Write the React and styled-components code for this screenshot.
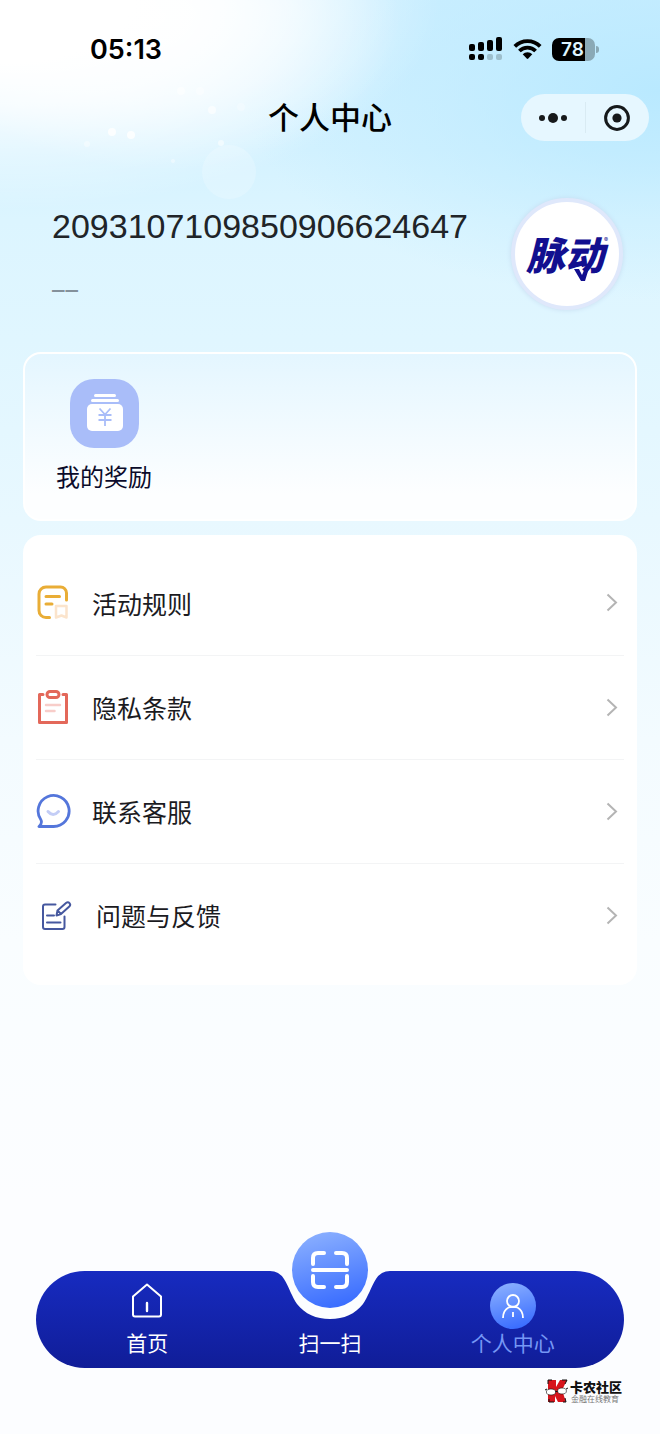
import React from 'react';
import styled, { createGlobalStyle } from 'styled-components';

const userId = '2093107109850906624647';

const GlobalStyle = createGlobalStyle`
    * {
        box-sizing: border-box;
    }

    body {
        margin: 0;
        color: #1b1b1f;
        font-family: Inter, "Noto Sans CJK SC", sans-serif;
        background: #fbfdff;
    }

    h1, p, ul {
        margin: 0;
        padding: 0;
    }

    button {
        padding: 0;
        border: 0;
        background: none;
        color: inherit;
        font: inherit;
        cursor: pointer;
    }

    a {
        color: inherit;
        text-decoration: none;
    }

    svg {
        display: block;
        flex: none;
    }
`;

const Page = styled.div`
    position: relative;
    isolation: isolate;
    display: flex;
    flex-direction: column;
    min-height: 100vh;
    background:
        radial-gradient(ellipse 440px 210px at 0 0, #fff 30%, rgba(255, 255, 255, .8) 50%, rgba(255, 255, 255, .35) 75%, rgba(255, 255, 255, 0) 100%),
        radial-gradient(ellipse 240px 150px at 160px 20px, rgba(255, 255, 255, .9) 0%, rgba(255, 255, 255, .5) 55%, rgba(255, 255, 255, 0) 100%),
        radial-gradient(ellipse 420px 210px at 100% 90px, #b9e9ff 0%, rgba(185, 233, 255, .45) 50%, rgba(185, 233, 255, 0) 100%),
        linear-gradient(180deg, #cdefff 0, #d4f2ff 150px, #dcf5ff 220px, #e0f6ff 340px, #e8f8ff 520px, #f3fbff 740px, #f9fdff 940px, #fcfdff 1200px);
`;

const Sparkles = styled.svg`
    position: absolute;
    top: 0;
    left: 0;
    z-index: -1;
`;

const StatusBar = styled.div`
    display: flex;
    align-items: center;
    justify-content: space-between;
    height: 94px;
    padding: 4px 65px 0 90px;
`;

const Clock = styled.span`
    font-size: 27px;
    font-weight: 600;
    color: #000;
`;

const StatusIcons = styled.div`
    display: flex;
    align-items: center;
    gap: 10px;
`;

const Battery = styled.div`
    position: relative;
    width: 43px;
    height: 23px;
    padding-right: 2px;
    border-radius: 7px;
    background: linear-gradient(90deg, #000 33px, #8aa9b6 33px);
    color: #dff4ff;
    font-size: 19px;
    font-weight: 600;
    line-height: 23px;
    text-align: center;

    &::after {
        content: "";
        position: absolute;
        top: 8px;
        right: -4px;
        width: 3px;
        height: 7px;
        border-radius: 0 3px 3px 0;
        background: #8aa9b6;
    }
`;

const TitleBar = styled.header`
    display: grid;
    grid-template-columns: 1fr auto 1fr;
    align-items: center;
    height: 47px;
    padding: 0 11px;
`;

const Title = styled.h1`
    grid-column: 2;
    font-size: 31px;
    font-weight: 500;
    line-height: 47px;
    color: #000;
`;

const Capsule = styled.div`
    justify-self: end;
    display: flex;
    align-items: center;
    width: 128px;
    height: 47px;
    border-radius: 24px;
    background: #e6f7ff;
`;

const CapsuleButton = styled.button`
    flex: 1;
    display: flex;
    justify-content: center;
    height: 31px;
    align-items: center;

    & + & {
        border-left: 1px solid #d9ebf3;
    }
`;

const Profile = styled.section`
    display: flex;
    justify-content: space-between;
    padding: 57px 37px 0 52px;
`;

const UserId = styled.p`
    padding-top: 8px;
    font-family: "Liberation Sans", sans-serif;
    font-size: 34px;
    line-height: 40px;
    color: #202428;
`;

const UserNote = styled.p`
    display: flex;
    gap: 1px;
    padding-top: 28px;
    font-size: 25px;
    line-height: 32px;
    color: #84919b;
`;

const Avatar = styled.div`
    flex: none;
    display: flex;
    align-items: center;
    justify-content: center;
    width: 112px;
    height: 112px;
    border: 4px solid #dfe8fb;
    border-radius: 50%;
    background: #fff;
    box-shadow: 0 0 5px #c6dcf0;
    color: #120f8f;
`;

const Brand = styled.span`
    position: relative;
    padding-top: 3px;
    font-size: 39px;
    font-weight: 900;
    font-style: italic;
    line-height: 48px;
`;

const BrandTail = styled.svg`
    position: absolute;
    right: 13px;
    bottom: -3px;
`;

const Registered = styled.sup`
    align-self: flex-start;
    padding-top: 34px;
    font-size: 6px;
    line-height: 8px;
`;

const RewardCard = styled.section`
    margin: 42px 23px 0;
    padding: 25px 31px 23px;
    border: 2px solid #fff;
    border-radius: 18px;
    background: linear-gradient(180deg, #e4f6ff 0%, #fdfeff 85%);
`;

const RewardLink = styled.a`
    display: inline-flex;
    flex-direction: column;
    align-items: center;
    gap: 12px;
    vertical-align: top;
    font-size: 24px;
    line-height: 36px;
    color: #0b0b2a;
`;

const Menu = styled.ul`
    margin: 14px 23px 0;
    padding: 16px 13px 18px;
    border-radius: 18px;
    background: #fff;
    list-style: none;
`;

const MenuItem = styled.li`
    & + & {
        border-top: 1px solid #f3f4f5;
    }
`;

const MenuLink = styled.a`
    display: flex;
    align-items: center;
    height: 104px;
    padding-right: 5px;
    font-size: 25px;

    ${MenuItem} + ${MenuItem} & {
        height: 103px;
    }
`;

const MenuLabel = styled.span`
    flex: 1;
    padding-top: 3px;
    padding-left: ${props => (props.$wide ? '24px' : '20px')};
    line-height: 36px;
`;

const Footer = styled.footer`
    margin-top: auto;
    padding: 60px 36px 30px;
`;

const TabBar = styled.nav`
    position: relative;
    display: grid;
    grid-template-columns: repeat(3, 1fr);
    height: 97px;
    padding: 12px 20px 0;
    border-radius: 49px;
    background: linear-gradient(180deg, #172bc0 0%, #101d98 100%);
`;

const Notch = styled.svg`
    position: absolute;
    top: -1px;
    left: calc(50% - 60px);
`;

const Tab = styled.a`
    display: flex;
    flex-direction: column;
    align-items: center;
    font-size: 21px;
    line-height: 26px;
    color: ${props => (props.$active ? '#7597f5' : '#fff')};
`;

const TabIcon = styled.span`
    display: flex;
    align-items: flex-start;
    justify-content: center;
    height: 48px;
`;

const Bubble = styled.span`
    display: flex;
    align-items: center;
    justify-content: center;
    width: ${props => props.$size}px;
    height: ${props => props.$size}px;
    border-radius: 50%;
    background: linear-gradient(165deg, #8bb0ff 5%, #3a6dff 90%);
`;

const ScanBubble = styled(Bubble)`
    position: absolute;
    top: -39px;
    left: calc(50% - 38px);
`;

const Watermark = styled.div`
    display: flex;
    justify-content: flex-end;
    gap: 2px;
    padding: 11px 2px 0 0;
`;

const WatermarkName = styled.p`
    font-size: 13px;
    font-weight: 900;
    line-height: 16px;
    color: #111;
`;

const WatermarkSlogan = styled.p`
    padding-left: 1px;
    font-size: 8px;
    line-height: 9px;
    color: #777;
`;

const SignalIcon = () => (
    <svg width="34" height="24" viewBox="0 0 34 24">
        <rect x="0" y="7" width="6" height="7" rx="2" />
        <rect x="9" y="5" width="6" height="9" rx="2" />
        <rect x="18" y="3" width="6" height="11" rx="2" />
        <rect x="27" y="0" width="6" height="14" rx="2" />
        <rect x="0" y="17" width="6" height="6" rx="2" />
        <rect x="9" y="17" width="6" height="6" rx="2" />
        <rect x="18" y="17" width="6" height="6" rx="2" fill="#9dbfcd" />
        <rect x="27" y="17" width="6" height="6" rx="2" fill="#9dbfcd" />
    </svg>
);

const WifiIcon = () => (
    <svg width="29" height="22" viewBox="0 0 29 22">
        <g fill="none" stroke="#000" strokeWidth="3.8">
            <path d="M1.8 8.3a18 18 0 0 1 25.4 0" />
            <path d="M6.4 13a11.5 11.5 0 0 1 16.2 0" />
        </g>
        <path d="M9.7 16.3a6.8 6.8 0 0 1 9.6 0l-4 4.3q-.8.8-1.6 0z" />
    </svg>
);

const RewardIcon = () => (
    <svg width="69" height="69" viewBox="0 0 69 69">
        <rect width="69" height="69" rx="24" fill="#a9bdf9" />
        <g fill="#fff">
            <rect x="24" y="15" width="22" height="3" rx="1.5" />
            <rect x="21" y="20" width="28" height="3" rx="1.5" />
            <rect x="17" y="25" width="36" height="27" rx="5" />
        </g>
        <path d="M29.5 29.5 35 35.5l5.5-6M35 35.5V47M28.5 36h13M28.5 41h13" fill="none" stroke="#a9bdf9" strokeWidth="1.8" />
    </svg>
);

const RulesIcon = () => (
    <svg width="36" height="36" viewBox="0 0 36 36" fill="none" strokeLinecap="round" strokeLinejoin="round">
        <path d="M13.5 32.5H10a7 7 0 0 1-7-7V9a7 7 0 0 1 7-7h14.5a6 6 0 0 1 6 6v7" stroke="#e9ad36" strokeWidth="3" />
        <path d="M10 11.5h13.5M10 19h6" stroke="#e9ad36" strokeWidth="3" />
        <path d="M20 21h10.5v11.5L25.5 30.5 20 32.5z" stroke="#fbe4cc" strokeWidth="2.5" />
    </svg>
);

const PrivacyIcon = () => (
    <svg width="36" height="36" viewBox="0 0 36 36" fill="none" strokeLinecap="round" strokeLinejoin="round">
        <path d="M7 4.5H3.5v28H30.500v-28H27" stroke="#e3685a" strokeWidth="3" />
        <rect x="11" y="1.5" width="12" height="6" rx="3" stroke="#e3685a" strokeWidth="3" />
        <path d="M10 15h14M10 21h8.500" stroke="#f8cdc9" strokeWidth="2.500" />
    </svg>
);

const ServiceIcon = () => (
    <svg width="36" height="36" viewBox="0 0 36 36" fill="none" strokeLinecap="round" strokeLinejoin="round">
        <path d="M3 32.500h14.500A15.500 15.500 0 1 0 5 26q1.500 3.500-2 6.500z" stroke="#5476db" strokeWidth="2.800" />
        <path d="M12 17.500q5 6 10.500 0" stroke="#c3cdf6" strokeWidth="3" />
    </svg>
);

const FeedbackIcon = () => (
    <svg width="36" height="36" viewBox="0 0 36 36" fill="none" stroke="#46589f" strokeWidth="2" strokeLinecap="round" strokeLinejoin="round">
        <path d="M19.500 6.500H9a2 2 0 0 0-2 2V29a2 2 0 0 0 2 2h17.500a2 2 0 0 0 2-2V18.500" />
        <path d="M11 17.500h7M11 24.500h13.500" />
        <path d="m20.500 17.500 1-5 8.500-7.500q2-1.500 3.500.2t-.2 3.300L25 16zM21.500 12.500l3.500 3.500" />
    </svg>
);

const Chevron = () => (
    <svg width="14" height="20" viewBox="0 0 14 20" fill="none" stroke="#b4b4b4" strokeWidth="2">
        <path d="M2.500 1.500 11 9.500l-8.500 8" />
    </svg>
);

const HomeIcon = () => (
    <svg width="32" height="35" viewBox="0 0 32 35" fill="none" stroke="#fff" strokeWidth="2" strokeLinecap="round" strokeLinejoin="round">
        <path d="M2 13.500 16 1.500l14 12V31.500a2 2 0 0 1-2 2H4a2 2 0 0 1-2-2z" />
        <path d="M16 20v8" strokeWidth="2.400" />
    </svg>
);

const ScanIcon = () => (
    <svg width="40" height="40" viewBox="0 0 40 40" fill="none" stroke="#fff" strokeWidth="4" strokeLinecap="round">
        <path d="M3 14V8q0-5 5-5h6M26 3h6q5 0 5 5v6M37 26v6q0 5-5 5h-6M14 37H8q-5 0-5-5v-6M3 20h34" />
    </svg>
);

const PersonIcon = () => (
    <svg width="24" height="26" viewBox="0 0 24 26" fill="none" stroke="#fff" strokeWidth="1.800">
        <circle cx="12" cy="8" r="6" />
        <path d="M2 25q0-7.500 5.500-10.500Q12 13 16.500 14.500 22 17.500 22 25M12 19v5" />
    </svg>
);

const PandaLogo = () => (
    <svg width="23" height="24" viewBox="0 0 23 24">
        <path d="M3 1h8v7l4-7h7l-5 10 4 12h-8l-3-6v6H3z" fill="#d7141c" />
        <path d="M3 5V1h4M17 1h5l-2 4M4 20v3h5M18 23h3l-1-4" fill="none" stroke="#111" />
        <ellipse cx="6" cy="13" rx="4.600" ry="3" fill="#fff" stroke="#111" strokeWidth=".6" />
        <ellipse cx="17" cy="12" rx="4.400" ry="3" fill="#fff" stroke="#111" strokeWidth=".6" />
        <path d="M10.500 12.500h2M0 11l2-1M21 10l2-1" stroke="#111" fill="none" />
    </svg>
);

const menuItems = [
    { label: '活动规则', icon: RulesIcon },
    { label: '隐私条款', icon: PrivacyIcon },
    { label: '联系客服', icon: ServiceIcon },
    { label: '问题与反馈', icon: FeedbackIcon, wide: true },
];

const App = () => (
    <Page>
        <GlobalStyle />
        <Sparkles width="300" height="230" fill="#fff">
            <circle cx="229" cy="172" r="27" opacity=".2" />
            <circle cx="112" cy="132" r="4" opacity=".8" />
            <circle cx="131" cy="135" r="4" opacity=".8" />
            <circle cx="212" cy="110" r="4" opacity=".6" />
            <circle cx="181" cy="91" r="4" opacity=".5" />
            <circle cx="200" cy="91" r="4" opacity=".4" />
            <circle cx="221" cy="143" r="3" opacity=".5" />
            <circle cx="87" cy="144" r="3" opacity=".4" />
            <circle cx="241" cy="107" r="4" opacity=".25" />
            <circle cx="173" cy="161" r="2" opacity=".4" />
        </Sparkles>
        <StatusBar>
            <Clock>05:13</Clock>
            <StatusIcons>
                <SignalIcon />
                <WifiIcon />
                <Battery>78</Battery>
            </StatusIcons>
        </StatusBar>
        <TitleBar>
            <Title>个人中心</Title>
            <Capsule>
                <CapsuleButton aria-label="更多">
                    <svg width="28" height="10" fill="#16191b">
                        <circle cx="3" cy="5" r="3" />
                        <circle cx="14" cy="5" r="5" />
                        <circle cx="25" cy="5" r="3" />
                    </svg>
                </CapsuleButton>
                <CapsuleButton aria-label="关闭">
                    <svg width="26" height="26" fill="#16191b">
                        <circle cx="13" cy="13" r="11.400" fill="none" stroke="#16191b" strokeWidth="3" />
                        <circle cx="13" cy="13" r="4.600" />
                    </svg>
                </CapsuleButton>
            </Capsule>
        </TitleBar>
        <Profile>
            <div>
                <UserId>{userId}</UserId>
                <UserNote><span>–</span><span>–</span></UserNote>
            </div>
            <Avatar>
                <Brand>
                    脉动
                    <BrandTail width="18" height="16" viewBox="0 0 18 16">
                        <path d="M1 2h5l3 6 3-7h4l-4 13H8z" fill="#120f8f" />
                    </BrandTail>
                </Brand>
                <Registered>®</Registered>
            </Avatar>
        </Profile>
        <RewardCard>
            <RewardLink href="#rewards">
                <RewardIcon />
                我的奖励
            </RewardLink>
        </RewardCard>
        <Menu>
            {menuItems.map(({ label, icon: Icon, wide }) => (
                <MenuItem key={label}>
                    <MenuLink href="#menu">
                        <Icon />
                        <MenuLabel $wide={wide}>{label}</MenuLabel>
                        <Chevron />
                    </MenuLink>
                </MenuItem>
            ))}
        </Menu>
        <Footer>
            <TabBar>
                <Notch width="120" height="50" viewBox="0 0 120 50">
                    <path d="M0 0v1q9 0 14 8c5 8 8 18 13 25 8 10 19 15 33 15s25-5 33-15c5-7 8-17 13-25q5-8 14-8V0z" fill="#fcfdff" />
                </Notch>
                <Tab href="#home">
                    <TabIcon><HomeIcon /></TabIcon>
                    首页
                </Tab>
                <Tab href="#scan">
                    <TabIcon>
                        <ScanBubble $size={76}><ScanIcon /></ScanBubble>
                    </TabIcon>
                    扫一扫
                </Tab>
                <Tab href="#me" $active>
                    <TabIcon>
                        <Bubble $size={46}><PersonIcon /></Bubble>
                    </TabIcon>
                    个人中心
                </Tab>
            </TabBar>
            <Watermark>
                <PandaLogo />
                <div>
                    <WatermarkName>卡农社区</WatermarkName>
                    <WatermarkSlogan>金融在线教育</WatermarkSlogan>
                </div>
            </Watermark>
        </Footer>
    </Page>
);

export default App;
